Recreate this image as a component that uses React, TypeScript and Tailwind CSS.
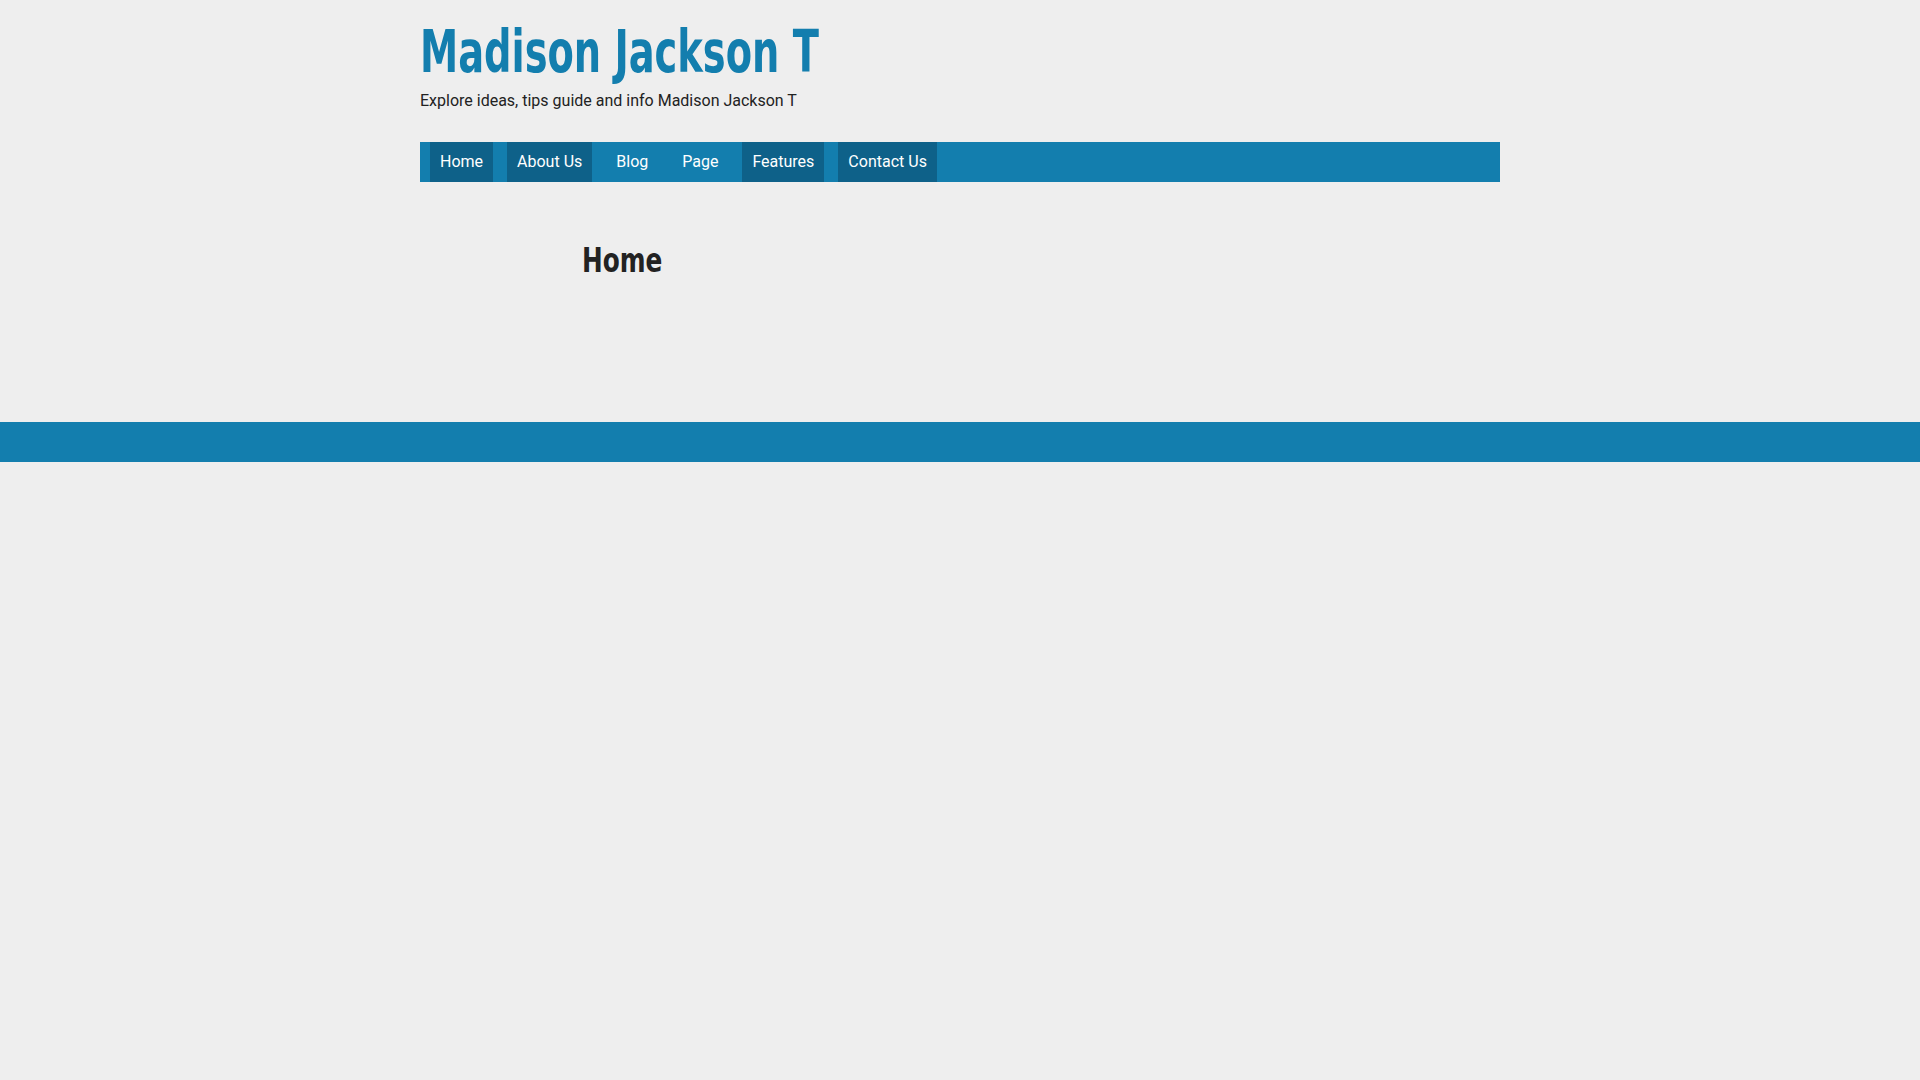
const NAV = [
  { label: "Home", dark: true },
  { label: "About Us", dark: true },
  { label: "Blog", dark: false },
  { label: "Page", dark: false },
  { label: "Features", dark: true },
  { label: "Contact Us", dark: true },
];

export default function App() {
  return (
    <div className="min-h-[1080px] bg-[#eeeeee] font-['Roboto',sans-serif]">
      <header className="mx-auto w-[1080px] pt-[16px]">
        <h1 className="origin-left scale-x-[0.735] whitespace-nowrap font-['DejaVu_Sans_Condensed',sans-serif] text-[58px] font-bold leading-[72px] text-[#137eae]">
          Madison Jackson T
        </h1>
        <p className="mt-[3px] text-[16px] leading-[20px] text-[#222222]">
          Explore ideas, tips guide and info Madison Jackson T
        </p>
        <nav className="mt-[31px] flex h-[40px] gap-[14px] bg-[#137eae] pl-[10px]">
          {NAV.map((item) => (
            <a
              key={item.label}
              href="#"
              className={
                "flex items-center px-[10px] text-[16px] text-white " +
                (item.dark ? "bg-[#0e6189]" : "")
              }
            >
              {item.label}
            </a>
          ))}
        </nav>
      </header>
      <main className="mx-auto w-[1080px] pb-[138px] pl-[162px] pt-[54px]">
        <h2 className="origin-left scale-x-[0.81] whitespace-nowrap font-['DejaVu_Sans_Condensed',sans-serif] text-[34px] font-bold leading-[48px] text-[#222222]">
          Home
        </h2>
      </main>
      <footer className="h-[40px] w-full bg-[#137eae]" />
    </div>
  );
}
